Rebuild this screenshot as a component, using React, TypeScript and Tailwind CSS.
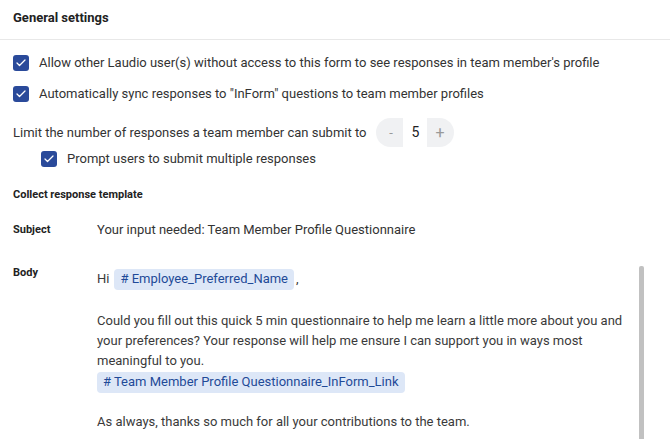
import { Check } from "lucide-react";

const font = { fontFamily: "Roboto, 'Noto Sans', sans-serif" };

function Box() {
  return (
    <span className="flex h-4 w-4 shrink-0 items-center justify-center rounded-[3px] bg-[#2a4a9a]">
      <Check size={12} strokeWidth={2.5} className="text-white" />
    </span>
  );
}

function Chip({ children }: { children: React.ReactNode }) {
  return (
    <span className="inline-flex h-[21px] items-center rounded-[4px] bg-[#dde7f7] px-[6px] text-[#1f4a98]">
      {children}
    </span>
  );
}

export default function App() {
  return (
    <div className="h-[439px] w-[670px] overflow-hidden bg-white text-[13px] text-[#333]" style={font}>
      {/* HEADER */}
      <div className="flex h-[40px] items-center border-b border-[#e8e8e8] px-[13px] pb-[3px] text-[13px] font-bold text-[#222]">
        General settings
      </div>

      <div className="px-[13px]">
        <div className="mt-[7px] flex h-[31px] items-center gap-[10px]">
          <Box />
          <span>Allow other Laudio user(s) without access to this form to see responses in team member's profile</span>
        </div>
        <div className="flex h-[31px] items-center gap-[10px]">
          <Box />
          <span>Automatically sync responses to "InForm" questions to team member profiles</span>
        </div>

        {/* LIMIT */}
        <div className="mt-[9px] flex h-[29px] items-center gap-[10px]">
          <span>Limit the number of responses a team member can submit to</span>
          <div className="flex h-[29px] items-stretch overflow-hidden rounded-full bg-[#f0f1f3]">
            <span className="flex w-[27px] items-center justify-center pl-[2px] text-[#999]">-</span>
            <span className="flex w-[24px] items-center justify-center bg-white text-[14px] text-[#222]">5</span>
            <span className="flex w-[27px] items-center justify-center pr-[2px] text-[16px] text-[#999]">+</span>
          </div>
        </div>
        <div className="ml-[28px] flex h-[24px] items-center gap-[10px]">
          <Box />
          <span>Prompt users to submit multiple responses</span>
        </div>

        {/* TEMPLATE */}
        <div className="mt-[14px] flex h-[20px] items-center text-[11px] font-bold text-[#222]">
          Collect response template
        </div>

        <div className="mt-[15px] flex h-[20px] items-center">
          <span className="w-[84px] text-[11px] font-bold text-[#222]">Subject</span>
          <span>Your input needed: Team Member Profile Questionnaire</span>
        </div>

        <div className="mt-[23px] flex items-start">
          <span className="flex h-[20px] w-[84px] items-center text-[11px] font-bold text-[#222]">Body</span>
          <div className="w-[535px] text-[#3a3a3a]">
            <div className="mt-[5px] flex h-[22px] items-center">
              <span className="mr-[5px]">Hi</span>
              <Chip># Employee_Preferred_Name</Chip>
              <span className="ml-[2px]">,</span>
            </div>
            <p className="mt-[21px] leading-[20px]">
              Could you fill out this quick 5 min questionnaire to help me learn a little more about you and your
              preferences? Your response will help me ensure I can support you in ways most meaningful to you.
            </p>
            <div className="mt-[1px] flex h-[20px] items-center">
              <Chip># Team Member Profile Questionnaire_InForm_Link</Chip>
            </div>
            <p className="mt-[20px] leading-[20px]">As always, thanks so much for all your contributions to the team.</p>
          </div>
          <div className="ml-auto mr-[13px] mt-[3px] h-[200px] w-[5px] rounded-t-[2px] bg-[#c1c1c1]" />
        </div>
      </div>
    </div>
  );
}
